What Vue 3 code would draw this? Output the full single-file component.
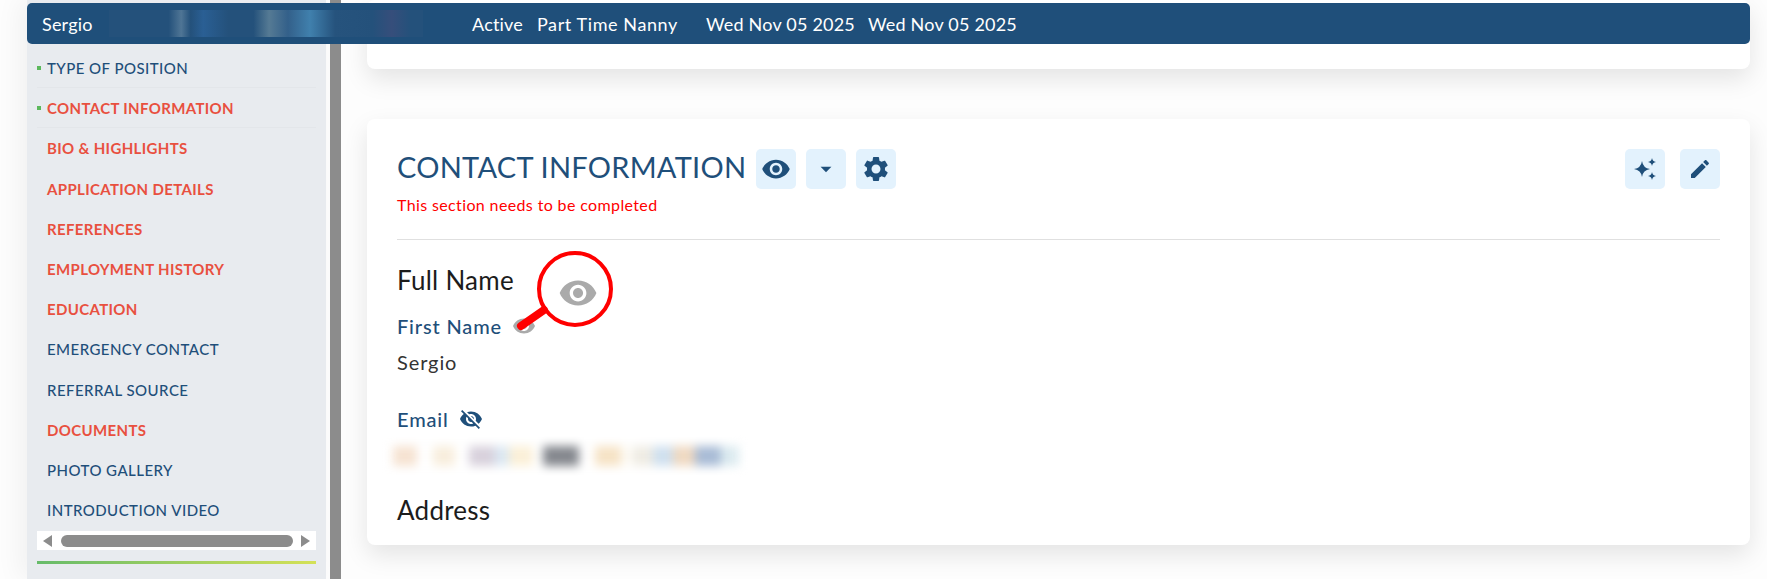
<template>
  <div class="page">
    <header class="topbar">
      <span class="name">Sergio</span>
      <span class="blur-name"></span>
      <span class="status">Active</span>
      <span class="role">Part Time Nanny</span>
      <span class="date1">Wed Nov 05 2025</span>
      <span class="date2">Wed Nov 05 2025</span>
    </header>

    <aside class="sidebar">
      <ul class="menu">
        <li
          v-for="item in menu"
          :key="item.label"
          :class="{ todo: item.todo, done: item.done }"
        >
          {{ item.label }}
        </li>
      </ul>
      <div class="hscroll">
        <span class="arrow left"></span>
        <span class="thumb"></span>
        <span class="arrow right"></span>
      </div>
      <div class="progress"></div>
    </aside>

    <div class="splitter"></div>

    <main class="main">
      <section class="card card-top"></section>

      <section class="card card-contact">
        <div class="head">
          <div class="head-left">
            <h2>CONTACT INFORMATION</h2>
            <button class="icon-btn">
              <svg viewBox="0 0 24 24" width="30" height="30"><path :d="eyePath" /></svg>
            </button>
            <button class="icon-btn">
              <svg viewBox="0 0 24 24" width="26" height="26"><path d="M7 10l5 5 5-5z" /></svg>
            </button>
            <button class="icon-btn">
              <svg viewBox="0 0 24 24" width="30" height="30"><path :d="gearPath" /></svg>
            </button>
          </div>
          <div class="head-right">
            <button class="icon-btn">
              <svg viewBox="0 0 24 24" width="24" height="24">
                <path d="M9 4Q10 11 17 12Q10 13 9 20Q8 13 1 12Q8 11 9 4zM19 1Q19.5 4.500 23 5Q19.500 5.500 19 9Q18.500 5.500 15 5Q18.500 4.500 19 1zM19 15Q19.500 18.500 23 19Q19.500 19.500 19 23Q18.500 19.500 15 19Q18.500 18.500 19 15z" />
              </svg>
            </button>
            <button class="icon-btn">
              <svg viewBox="0 0 24 24" width="24" height="24"><path :d="pencilPath" /></svg>
            </button>
          </div>
        </div>
        <p class="warning">This section needs to be completed</p>
        <hr />

        <h3>Full Name</h3>
        <div class="label">
          First Name
          <svg class="eye-grey" viewBox="0 0 24 24" width="24" height="24"><path :d="eyePath" /></svg>
        </div>
        <div class="value">Sergio</div>

        <div class="label email">
          Email
          <svg viewBox="0 0 24 24" width="24" height="24"><path :d="eyeOffPath" /></svg>
        </div>
        <div class="blur-email">
          <span
            v-for="(b, i) in blobs"
            :key="i"
            :style="{ width: b.w + 'px', background: b.c }"
          ></span>
        </div>

        <h3 class="address">Address</h3>
      </section>
    </main>

    <svg class="callout" width="120" height="110" viewBox="0 0 120 110">
      <circle cx="75" cy="39" r="36" fill="#fff" stroke="#f00" stroke-width="4" />
      <path d="M21 76L44 60" stroke="#f00" stroke-width="8" stroke-linecap="round" />
      <g transform="translate(58 23) scale(1.67)">
        <path :d="eyePath" fill="#aaa" />
      </g>
    </svg>
  </div>
</template>

<script setup>
const menu = [
  { label: 'TYPE OF POSITION', done: true },
  { label: 'CONTACT INFORMATION', done: true, todo: true },
  { label: 'BIO & HIGHLIGHTS', todo: true },
  { label: 'APPLICATION DETAILS', todo: true },
  { label: 'REFERENCES', todo: true },
  { label: 'EMPLOYMENT HISTORY', todo: true },
  { label: 'EDUCATION', todo: true },
  { label: 'EMERGENCY CONTACT' },
  { label: 'REFERRAL SOURCE' },
  { label: 'DOCUMENTS', todo: true },
  { label: 'PHOTO GALLERY' },
  { label: 'INTRODUCTION VIDEO' },
]

const blobs = [
  { w: 4, c: '#fff' },
  { w: 24, c: '#f6e3d2' },
  { w: 16, c: '#fff' },
  { w: 22, c: '#f8eedd' },
  { w: 14, c: '#fff' },
  { w: 26, c: '#d8d1dc' },
  { w: 14, c: '#dbe8f3' },
  { w: 24, c: '#fbf0d8' },
  { w: 10, c: '#fff' },
  { w: 36, c: '#85888e' },
  { w: 16, c: '#fff' },
  { w: 26, c: '#f6e3c6' },
  { w: 12, c: '#fdfbf5' },
  { w: 20, c: '#efece4' },
  { w: 20, c: '#cfe0ef' },
  { w: 22, c: '#efd9c2' },
  { w: 26, c: '#a9bcd6' },
  { w: 26, c: '#dcebf0' },
]

const eyePath = 'M12 4.500C7 4.500 2.730 7.610 1 12c1.730 4.390 6 7.500 11 7.500s9.270-3.110 11-7.500c-1.730-4.390-6-7.500-11-7.500zM12 17c-2.760 0-5-2.240-5-5s2.240-5 5-5 5 2.240 5 5-2.240 5-5 5zm0-8c-1.660 0-3 1.340-3 3s1.340 3 3 3 3-1.340 3-3-1.340-3-3-3z'
const eyeOffPath = 'M12 7c2.760 0 5 2.240 5 5 0 .65-.13 1.260-.36 1.830l2.920 2.920c1.510-1.260 2.700-2.890 3.430-4.750-1.730-4.390-6-7.500-11-7.500-1.400 0-2.740.25-3.980.7l2.160 2.160C10.740 7.130 11.350 7 12 7zM2 4.270l2.280 2.280.46.46C3.080 8.300 1.780 10.020 1 12c1.730 4.390 6 7.500 11 7.500 1.550 0 3.030-.3 4.380-.84l.42.42L19.730 22 21 20.730 3.270 3 2 4.270zM7.530 9.800l1.550 1.550c-.05.21-.08.43-.08.65 0 1.660 1.340 3 3 3 .22 0 .44-.03.65-.08l1.550 1.550c-.67.33-1.410.53-2.200.53-2.760 0-5-2.240-5-5 0-.79.2-1.530.53-2.200zm4.310-.78l3.150 3.150.02-.16c0-1.660-1.340-3-3-3l-.17.01z'
const gearPath = 'M19.140 12.940c.04-.3.06-.61.06-.94 0-.32-.02-.64-.07-.94l2.030-1.580c.18-.14.23-.41.12-.61l-1.920-3.320c-.12-.22-.37-.29-.59-.22l-2.390.96c-.5-.38-1.030-.7-1.620-.94l-.36-2.540c-.04-.24-.24-.41-.48-.41h-3.840c-.24 0-.43.17-.47.41l-.36 2.540c-.59.24-1.130.57-1.620.94l-2.390-.96c-.22-.08-.47 0-.59.22L2.740 8.870c-.12.21-.08.47.12.61l2.030 1.580c-.05.3-.09.63-.09.94s.02.64.07.94l-2.030 1.580c-.18.14-.23.41-.12.61l1.920 3.320c.12.22.37.29.59.22l2.390-.96c.5.38 1.030.7 1.620.94l.36 2.540c.05.24.24.41.48.41h3.840c.24 0 .44-.17.47-.41l.36-2.540c.59-.24 1.130-.56 1.620-.94l2.390.96c.22.08.47 0 .59-.22l1.920-3.320c.12-.22.07-.47-.12-.61l-2.010-1.580zM12 15.600c-1.980 0-3.600-1.620-3.600-3.600s1.620-3.600 3.600-3.600 3.600 1.620 3.600 3.600-1.620 3.600-3.600 3.600z'
const pencilPath = 'M3 17.250V21h3.750L17.810 9.940l-3.750-3.750L3 17.250zM20.710 7.040c.39-.39.39-1.020 0-1.410l-2.340-2.340c-.39-.39-1.020-.39-1.410 0l-1.830 1.830 3.750 3.750 1.830-1.830z'
</script>

<style>
html,
body {
  margin: 0;
  background: #fdfdfd;
}
</style>

<style scoped>
.page {
  position: relative;
  display: flex;
  width: 1767px;
  height: 579px;
  overflow: hidden;
  font-family: 'Lato', 'Noto Sans', sans-serif;
  color: #1f4f7a;
}

.topbar {
  position: absolute;
  top: 3px;
  left: 27px;
  right: 17px;
  height: 41px;
  z-index: 2;
  display: flex;
  align-items: center;
  background: #1f4f7a;
  border-radius: 5px;
  color: #fff;
  font-size: 18px;
  letter-spacing: 0.2px;
  white-space: nowrap;
}
.name {
  margin-left: 15px;
  width: 67px;
}
.blur-name {
  width: 314px;
  height: 27px;
  background: linear-gradient(
    90deg,
    #24517b 0,
    #24517b 19%,
    #4f7595 23%,
    #24517b 26%,
    #2a5f94 30%,
    #24517b 38%,
    #24517b 46%,
    #557a94 51%,
    #33608a 57%,
    #4080ad 64%,
    #26537d 72%,
    #24517b 84%,
    #364e7b 90%,
    #24517b 96%
  );
}
.status {
  margin-left: 49px;
  width: 65px;
}
.role {
  width: 169px;
  letter-spacing: 0.6px;
}
.date1 {
  width: 162px;
}

.sidebar {
  flex: none;
  width: 299px;
  margin-left: 27px;
  padding-top: 48px;
  box-sizing: border-box;
  background: #e8ebef;
  box-shadow: -8px 0 24px rgba(0, 0, 0, 0.05);
}
.menu {
  list-style: none;
  margin: 0;
  padding: 0 10px;
}
.menu li {
  position: relative;
  height: 40.2px;
  line-height: 40px;
  padding-left: 10px;
  font-size: 15px;
  font-weight: 500;
  letter-spacing: 0.45px;
  color: #1f4f7a;
  box-sizing: border-box;
}
.menu li.todo {
  color: #e8503f;
  font-weight: 700;
  letter-spacing: 0.35px;
}
.menu li.done {
  border-bottom: 1px solid #e3e6ea;
}
.menu li.done::before {
  content: '';
  position: absolute;
  left: 0;
  top: 18px;
  width: 4px;
  height: 4px;
  background: #5cb85c;
}
.hscroll {
  display: flex;
  align-items: center;
  justify-content: space-between;
  height: 19px;
  margin: 1px 10px 0;
  padding: 0 6px;
  background: #fff;
}
.thumb {
  width: 232px;
  height: 12px;
  border-radius: 6px;
  background: #8c8c8c;
}
.arrow {
  width: 0;
  height: 0;
  border-top: 6px solid transparent;
  border-bottom: 6px solid transparent;
}
.arrow.left {
  border-right: 9px solid #8c8c8c;
}
.arrow.right {
  border-left: 9px solid #8c8c8c;
}
.progress {
  height: 3px;
  margin: 11px 10px 0;
  background: linear-gradient(90deg, #66bb6a, #d4e157);
}

.splitter {
  flex: none;
  width: 11px;
  margin: 0 5px 0 4px;
  background: #8c8c8c;
}

.main {
  flex: 1;
  display: flex;
  flex-direction: column;
  gap: 50px;
  padding: 0 17px 0 21px;
  min-width: 0;
}
.card {
  background: #fff;
  border-radius: 8px;
  box-shadow: 0 10px 25px rgba(0, 0, 0, 0.1);
}
.card-top {
  height: 69px;
  flex: none;
}
.card-contact {
  flex: none;
  height: 426px;
  padding: 30px 30px 0;
  box-sizing: border-box;
}
.head {
  display: flex;
  justify-content: space-between;
  align-items: center;
  height: 40px;
}
.head-left,
.head-right {
  display: flex;
  align-items: center;
}
.head-left {
  gap: 10px;
}
.head-right {
  gap: 15px;
}
h2 {
  margin: 0 0 6px;
  font-size: 29px;
  font-weight: 400;
  letter-spacing: 0.25px;
}
.icon-btn {
  display: flex;
  align-items: center;
  justify-content: center;
  width: 40px;
  height: 40px;
  padding: 0;
  border: 0;
  border-radius: 5px;
  background: #e3f2fd;
}
.icon-btn svg,
.label svg {
  fill: #1f4f7a;
}
.warning {
  margin: 7px 0 0;
  font-size: 16px;
  line-height: 18px;
  letter-spacing: 0.37px;
  color: #f00;
}
hr {
  margin: 25px 0 0;
  border: 0;
  border-top: 1px solid #e0e0e0;
}
h3 {
  margin: 26px 0 0;
  font-size: 26px;
  line-height: 28px;
  font-weight: 400;
  letter-spacing: 0.25px;
  color: #1c1c1c;
}
.label {
  display: flex;
  align-items: center;
  gap: 10px;
  margin-top: 21px;
  height: 22px;
  font-size: 20px;
  font-weight: 500;
  letter-spacing: 0.85px;
}
.label.email {
  margin-top: 35px;
}
.label .eye-grey {
  fill: #aaa;
}
.value {
  margin-top: 14px;
  font-size: 20px;
  line-height: 22px;
  font-weight: 400;
  letter-spacing: 0.9px;
  color: #333;
}
.blur-email {
  display: flex;
  width: 350px;
  height: 30px;
  margin: 13px 0 0 -8px;
  filter: blur(5px);
  overflow: hidden;
}
.blur-email span {
  flex: none;
  height: 20px;
  margin-top: 3px;
}
h3.address {
  margin-top: 23px;
}

.callout {
  position: absolute;
  left: 500px;
  top: 250px;
  z-index: 1;
}
</style>
